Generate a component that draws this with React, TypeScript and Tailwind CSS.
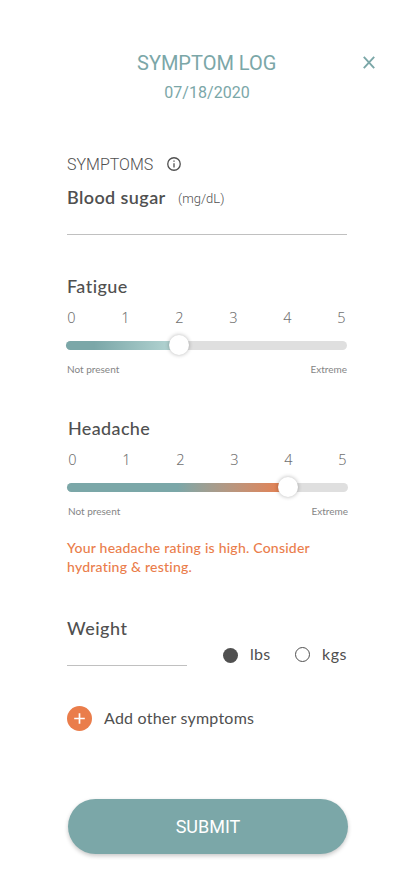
import React from "react";

const levels = [0, 1, 2, 3, 4, 5];

type RatingProps = {
  name: string;
  nameClass: string;
  fillClass: string;
  thumbClass: string;
};

function Rating({ name, nameClass, fillClass, thumbClass }: RatingProps) {
  return (
    <section className="w-[280px]">
      <h2 className={`-mt-px h-6 text-[18px] leading-6 font-medium ${nameClass}`}>{name}</h2>
      <div className="mt-[9px] flex h-5 w-[279px] justify-between font-['Noto_Sans',sans-serif] text-[14.5px] leading-5 font-light text-[#707070]">
        {levels.map((n) => (
          <span key={n} className="flex w-[9px] justify-center">
            {n}
          </span>
        ))}
      </div>
      <div className="relative mt-[14px] -ml-px h-[9px] w-[281px] rounded-full bg-[#dfdfdf]">
        <div className={`h-full rounded-l-full ${fillClass}`} />
        <div
          className={`absolute -top-[6px] size-5 rounded-full bg-white shadow-[0_0_4px_rgba(0,0,0,0.3)] ${thumbClass}`}
        />
      </div>
      <div className="mt-3 mb-px flex h-[14px] justify-between text-[10px] leading-[14px] text-[#858585]">
        <span>Not present</span>
        <span>Extreme</span>
      </div>
    </section>
  );
}

export default function App() {
  return (
    <main className="flex h-[896px] w-[414px] flex-col overflow-hidden bg-white pt-[51px] pl-[67px] font-['Lato',sans-serif] text-[#505050] [font-variant-ligatures:none]">
      <header className="w-[310px] font-['Roboto',sans-serif] text-[#7ba7a8]">
        <div className="flex h-6 items-center justify-between pl-[70px]">
          <h1 className="text-[20px] leading-6 whitespace-nowrap">SYMPTOM LOG</h1>
          <button aria-label="Close" className="mr-[2px] -mt-px">
            <svg width="12" height="13" viewBox="0 0 12 13" fill="none" stroke="currentColor" strokeWidth="1.9">
              <path d="M0.8 0.8 11.2 12.2M11.2 0.8 0.8 12.2" />
            </svg>
          </button>
        </div>
        <p className="mt-2 w-[280px] text-center text-[16px] leading-5 tracking-[0.05px]">07/18/2020</p>
      </header>

      <div className="mt-[51px] flex h-5 items-center font-['Roboto',sans-serif]">
        <span className="w-[100px] pt-[2px] text-[16px] leading-5 font-light">SYMPTOMS</span>
        <svg width="14" height="14" viewBox="0 0 14 14" fill="none" stroke="currentColor" strokeWidth="1.3">
          <circle cx="7" cy="7" r="6.25" />
          <path d="M7 6.2V10.5M7 3.5V4.8" />
        </svg>
      </div>
      <div className="mt-[11px] flex h-6 items-center">
        <h2 className="w-[111px] text-[18px] leading-6 font-semibold whitespace-nowrap tracking-[0.4px]">Blood sugar</h2>
        <span className="pt-1 font-['Roboto',sans-serif] text-[13px] font-light">(mg/dL)</span>
      </div>
      <div className="mt-[25px] h-px w-[280px] bg-[#c0c0c0]" />

      <div className="mt-10">
        <Rating
          name="Fatigue"
          nameClass="tracking-[0.45px]"
          fillClass="w-[113px] bg-linear-to-r from-[#7ba7a8] from-25% to-[#b8d8d6]"
          thumbClass="left-[103px]"
        />
      </div>
      <div className="mt-10 ml-px">
        <Rating
          name="Headache"
          nameClass="tracking-[0.35px]"
          fillClass="w-[221px] bg-linear-to-r from-[#7ba7a8] from-50% to-[#e97d4b]"
          thumbClass="left-[211px]"
        />
      </div>

      <p className="mt-[19px] mb-px h-[38px] w-[280px] text-[14px] leading-[19px] font-medium tracking-[0.23px] text-[#ea7d4b]">
        Your headache rating is high. Consider
        <br />
        hydrating &amp; resting.
      </p>

      <div className="mt-[39px] flex h-[50px] w-[290px]">
        <div className="h-full w-[120px] border-b border-[#c0c0c0]">
          <h2 className="text-[18px] leading-6 font-medium tracking-[0.5px]">Weight</h2>
        </div>
        <div className="mt-7 ml-9 flex h-5 items-center text-[16px] leading-5">
          <span className="mt-[2px] size-[15px] rounded-full bg-[#505050]" />
          <span className="ml-3 w-[45px] tracking-[0.3px]">lbs</span>
          <span className="size-[15px] rounded-full border border-[#505050]" />
          <span className="ml-3 tracking-[0.5px]">kgs</span>
        </div>
      </div>

      <button className="mt-10 flex h-[25px] items-center text-[16px] leading-5">
        <svg width="25" height="25" viewBox="0 0 25 25">
          <circle cx="12.5" cy="12.5" r="12.5" fill="#ea7d4b" />
          <path d="M12.5 7.2V17.8M7.2 12.5H17.8" stroke="white" strokeWidth="1.7" />
        </svg>
        <span className="-mt-[2px] ml-3 whitespace-nowrap tracking-[0.22px]">Add other symptoms</span>
      </button>

      <button className="mt-[68px] ml-px h-[55px] w-[280px] shrink-0 rounded-full bg-[#7ba7a8] font-['Roboto',sans-serif] text-[18px] text-white shadow-[0_2px_4px_rgba(0,0,0,0.22)]">
        SUBMIT
      </button>
    </main>
  );
}
